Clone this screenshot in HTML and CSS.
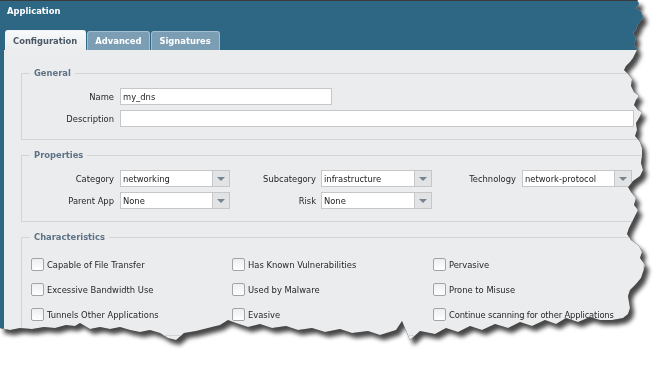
FILE: index.html
```html
<!DOCTYPE html>
<html lang="en">
<head>
  <meta charset="UTF-8">
  <title>Application</title>
  <link rel="stylesheet" href="styles.css">
</head>
<body>
  <div class="torn">
    <div class="window">
      <div class="titlebar">
        <div class="title">Application</div>
        <div class="tabs">
          <div class="tab active">Configuration</div>
          <div class="tab">Advanced</div>
          <div class="tab">Signatures</div>
        </div>
      </div>

      <div class="content">
        <fieldset class="group">
          <legend>General</legend>
          <div class="row">
            <label for="app-name">Name</label>
            <input type="text" id="app-name" class="text-field name-field" value="my_dns" readonly>
          </div>
          <div class="row">
            <label for="app-desc">Description</label>
            <input type="text" id="app-desc" class="text-field desc-field" value="" readonly>
          </div>
        </fieldset>

        <fieldset class="group">
          <legend>Properties</legend>
          <div class="row">
            <label>Category</label>
            <div class="combo"><span class="combo-text">networking</span><span class="combo-arrow"></span></div>
            <label class="mid-label">Subcategory</label>
            <div class="combo wide"><span class="combo-text">infrastructure</span><span class="combo-arrow"></span></div>
            <label class="right-label">Technology</label>
            <div class="combo"><span class="combo-text">network-protocol</span><span class="combo-arrow"></span></div>
          </div>
          <div class="row">
            <label>Parent App</label>
            <div class="combo"><span class="combo-text">None</span><span class="combo-arrow"></span></div>
            <label class="mid-label">Risk</label>
            <div class="combo wide"><span class="combo-text">None</span><span class="combo-arrow"></span></div>
          </div>
        </fieldset>

        <fieldset class="group">
          <legend>Characteristics</legend>
          <div class="checks">
            <div class="check"><span class="box"></span>Capable of File Transfer</div>
            <div class="check"><span class="box"></span>Has Known Vulnerabilities</div>
            <div class="check"><span class="box"></span>Pervasive</div>
            <div class="check"><span class="box"></span>Excessive Bandwidth Use</div>
            <div class="check"><span class="box"></span>Used by Malware</div>
            <div class="check"><span class="box"></span>Prone to Misuse</div>
            <div class="check"><span class="box"></span>Tunnels Other Applications</div>
            <div class="check"><span class="box"></span>Evasive</div>
            <div class="check"><span class="box"></span><span class="tight">Continue scanning for other Applications</span></div>
          </div>
        </fieldset>
      </div>
    </div>
  </div>
</body>
</html>
```

FILE: styles.css
```css
body {
  margin: 0;
  background-color: #fff;
  font-family: "DejaVu Sans Condensed", "DejaVu Sans", sans-serif;
  font-size: 9.3px;
  color: #262626;
}

/* torn paper effect: outline + drop shadow around the clipped window */
.torn {
  width: 652px;
  height: 352px;
  filter: drop-shadow(0 0 0.6px #1a1a1a) drop-shadow(4px 5px 2px rgba(0, 0, 0, 0.72));
}

.window {
  width: 650px;
  height: 350px;
  display: flex;
  flex-direction: column;
  background-color: #ebecee;
  clip-path: polygon(
    0 0, 637px 0, 639px 4px, 636px 8px, 641px 12px, 643px 18px, 638px 24px, 636px 30px,
    633px 33px, 636px 38px, 634px 44px, 637px 50px, 633px 58px, 630px 62px, 626px 66px,
    624px 70px, 628px 74px, 632px 79px, 631px 86px, 634px 92px, 639px 96px, 636px 100px,
    634px 105px, 638px 110px, 642px 112px, 639px 118px, 636px 123px, 637px 130px,
    635px 136px, 640px 142px, 642px 148px, 642px 156px, 641px 163px, 643px 170px,
    640px 176px, 633px 181px, 628px 187px, 631px 192px, 636px 198px, 634px 205px,
    638px 210px, 635px 216px, 632px 222px, 629px 228px, 627px 234px, 631px 240px,
    639px 246px, 642px 252px, 640px 258px, 645px 265px, 643px 272px, 641px 278px,
    636px 284px, 630px 290px, 628px 296px, 629px 302px, 630px 308px, 628px 314px,
    623px 318px, 612px 320px, 600px 320px, 590px 317px, 578px 322px, 566px 318px,
    556px 324px, 545px 320px, 532px 326px, 520px 322px, 508px 328px, 495px 324px,
    482px 330px, 470px 326px, 458px 332px, 446px 328px, 435px 334px, 420px 331px,
    410px 340px, 402px 321px, 396px 330px, 380px 335px, 368px 331px, 352px 333px,
    340px 329px, 325px 332px, 312px 328px, 298px 330px, 286px 326px, 272px 328px,
    260px 324px, 248px 327px, 236px 323px, 228px 320px, 220px 325px, 208px 328px,
    196px 331px, 184px 333px, 176px 340px, 168px 338px, 160px 333px, 150px 330px,
    140px 332px, 130px 330px, 120px 327px, 110px 329px, 100px 327px, 90px 329px,
    80px 323px, 75px 326px, 66px 325px, 55px 328px, 44px 327px, 32px 329px,
    20px 328px, 10px 330px, 0 328px
  );
}

.titlebar {
  height: 49px;
  border-top: 1px solid #3a3a3a;
  background-color: #2e6784;
  padding-left: 5px;
  display: flex;
  flex-direction: column;
  justify-content: space-between;
}

.title {
  color: #fff;
  font-weight: bold;
  line-height: 12px;
  padding: 4px 0 0 2px;
}

.tabs {
  display: flex;
  align-items: flex-end;
  gap: 1px;
}

.tab {
  height: 18px;
  line-height: 18px;
  padding: 0 8px 0 7px;
  background-color: #7c9eb4;
  border: 1px solid #a5bdcc;
  border-bottom: none;
  border-radius: 3px 3px 0 0;
  color: #fff;
  font-weight: bold;
}

.tab.active {
  height: 19px;
  line-height: 19px;
  background: linear-gradient(#f8f9fa, #ebecee);
  border-color: #f2f3f4;
  color: #4a5865;
}

.content {
  flex: 1;
  border-left: 4px solid #2e6784;
  padding: 16px 0 0 17px;
}

.group {
  width: 623px;
  box-sizing: border-box;
  margin: 0 0 8px;
  padding: 8px 0 12px;
  border: 1px solid #d3d4d6;
}

.group legend {
  margin-left: 8px;
  padding: 0 4px;
  line-height: 14px;
  font-weight: bold;
  color: #5d7285;
}

.row {
  display: flex;
  align-items: center;
  height: 17px;
}

.row + .row {
  margin-top: 5px;
}

.row label {
  width: 92px;
  margin-right: 6px;
  text-align: right;
  flex-shrink: 0;
}

.row .mid-label {
  width: 86px;
  margin-right: 5px;
}

.row .right-label {
  width: 84px;
  margin-right: 6px;
}

.text-field {
  box-sizing: border-box;
  height: 17px;
  margin: 0;
  padding: 0 2px;
  border: 1px solid #c6c7c9;
  background-color: #fff;
  font: inherit;
  color: #222;
  outline: none;
}

.name-field {
  width: 212px;
}

.desc-field {
  width: 514px;
}

.combo {
  display: flex;
  width: 110px;
  height: 17px;
  flex-shrink: 0;
}

.combo.wide {
  width: 111px;
}

.combo-text {
  flex: 1;
  box-sizing: border-box;
  border: 1px solid #c6c7c9;
  background-color: #fff;
  padding-left: 2px;
  line-height: 15px;
  color: #222;
  white-space: nowrap;
  overflow: hidden;
}

.combo-arrow {
  width: 17px;
  box-sizing: border-box;
  border: 1px solid #c6c7c9;
  border-left: none;
  background-color: #e2e3e5;
  display: flex;
  justify-content: center;
  align-items: center;
}

.combo-arrow::after {
  content: "";
  border-left: 4px solid transparent;
  border-right: 4px solid transparent;
  border-top: 4px solid #76848f;
}

.checks {
  display: grid;
  grid-template-columns: repeat(3, 201px);
  row-gap: 12px;
  padding: 6px 0 2px 9px;
}

.check {
  display: flex;
  align-items: center;
  height: 13px;
  white-space: nowrap;
}

.tight {
  letter-spacing: -0.15px;
}

.box {
  width: 13px;
  height: 13px;
  box-sizing: border-box;
  margin-right: 3px;
  border: 1px solid #a2a5a8;
  border-radius: 2px;
  background: linear-gradient(#eceef0, #fff);
}
```
